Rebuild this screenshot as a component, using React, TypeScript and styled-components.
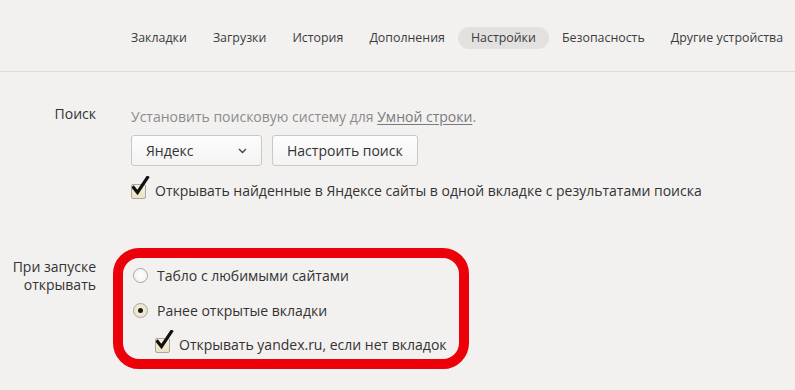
import React from 'react';
import styled, { createGlobalStyle } from 'styled-components';

const GlobalStyle = createGlobalStyle`
  html, body {
    margin: 0;
    padding: 0;
    background: #f2f1f0;
  }
  body {
    font-family: "Open Sans", "Noto Sans", sans-serif;
    color: #333;
    width: 795px;
    height: 390px;
    overflow: hidden;
  }
`;

const Page = styled.div`
  width: 795px;
  height: 390px;
  background: #f2f1f0;
`;

const Nav = styled.nav`
  display: flex;
  align-items: center;
  height: 72px;
  padding-left: 118px;
  border-bottom: 1px solid #dcdbda;
  box-sizing: border-box;
  padding-top: 5px;
`;

const NavItem = styled.div<{ active?: boolean }>`
  height: 22px;
  line-height: 22px;
  padding: 0 13px;
  border-radius: 11px;
  font-size: 12.4px;
  color: #3c3c3c;
  white-space: nowrap;
  background: ${(p) => (p.active ? '#e2e1e0' : 'transparent')};
`;

const Section = styled.section<{ top: number }>`
  display: grid;
  grid-template-columns: 96px 1fr;
  column-gap: 35px;
  margin-top: ${(p) => p.top}px;
`;

const Label = styled.div`
  text-align: right;
  font-size: 14px;
  line-height: 18px;
  color: #333;
`;

const Content = styled.div`
  display: flex;
  flex-direction: column;
  align-items: flex-start;
`;

const Hint = styled.div`
  font-size: 14px;
  line-height: 17px;
  color: #8c8c8c;
  margin-top: 3px;
`;

const HintLink = styled.span`
  color: #7a7a7a;
  text-decoration: underline;
  text-underline-offset: 2px;
`;

const Controls = styled.div`
  display: flex;
  gap: 10px;
  margin-top: 10px;
`;

const Button = styled.div<{ width: number }>`
  display: flex;
  align-items: center;
  justify-content: space-between;
  box-sizing: border-box;
  width: ${(p) => p.width}px;
  height: 31px;
  padding: 0 14px;
  border: 1px solid #c9c8c7;
  border-radius: 3px;
  background: linear-gradient(#fdfdfd, #f3f3f3);
  font-size: 14px;
  color: #333;
`;

const CheckRow = styled.div<{ top: number; indent?: number }>`
  display: flex;
  align-items: center;
  gap: 9px;
  margin-top: ${(p) => p.top}px;
  margin-left: ${(p) => p.indent ?? 0}px;
  font-size: 14px;
  color: #333;
  white-space: nowrap;
`;

const BoxWrap = styled.div`
  position: relative;
  width: 15px;
  height: 16px;
  flex: none;
`;

const Box = styled.div`
  position: absolute;
  left: 0;
  bottom: 0;
  width: 15px;
  height: 15px;
  box-sizing: border-box;
  border: 1px solid #a9a6a0;
  border-radius: 2px;
  background: linear-gradient(#f7f1dc, #ece3c4);
`;

const Tick = styled.svg`
  position: absolute;
  left: 1px;
  bottom: 2px;
`;

const Radio = styled.div<{ checked?: boolean }>`
  position: relative;
  width: 15px;
  height: 15px;
  box-sizing: border-box;
  border-radius: 50%;
  border: 1px solid #a8a6a3;
  background: ${(p) =>
    p.checked ? 'radial-gradient(#f7f1dc, #e9dfbf)' : 'radial-gradient(#ffffff, #f0efee)'};
  flex: none;
  margin-left: 2px;
  &::after {
    content: '';
    display: ${(p) => (p.checked ? 'block' : 'none')};
    position: absolute;
    left: 50%;
    top: 50%;
    width: 5px;
    height: 5px;
    margin: -2.5px 0 0 -2.5px;
    border-radius: 50%;
    background: #1a1a1a;
  }
`;

const OptionGroup = styled.div`
  position: relative;
  display: flex;
  flex-direction: column;
  align-items: flex-start;
  padding-top: 8px;
`;

// red annotation frame drawn over the startup options
const Highlight = styled.div`
  position: absolute;
  left: -18px;
  top: -10px;
  width: 356px;
  height: 121px;
  box-sizing: border-box;
  border: 10px solid #ec0009;
  border-radius: 26px;
  pointer-events: none;
`;

const Checkbox: React.FC = () => (
  <BoxWrap>
    <Box />
    <Tick width="18" height="21" viewBox="0 0 18 21">
      <path d="M1.5 11.5 L5.5 16.5 L15.5 1.5" fill="none" stroke="#111" strokeWidth="3.2" strokeLinecap="square" />
    </Tick>
  </BoxWrap>
);

const Chevron: React.FC = () => (
  <svg width="9" height="6" viewBox="0 0 9 6">
    <path d="M1 1 L4.5 4.5 L8 1" fill="none" stroke="#444" strokeWidth="1.4" />
  </svg>
);

const tabs = ['Закладки', 'Загрузки', 'История', 'Дополнения', 'Настройки', 'Безопасность', 'Другие устройства'];

const App: React.FC = () => {
  return (
    <Page>
      <GlobalStyle />
      <Nav>
        {tabs.map((t) => (
          <NavItem key={t} active={t === 'Настройки'}>
            {t}
          </NavItem>
        ))}
      </Nav>

      <Section top={33}>
        <Label>Поиск</Label>
        <Content>
          <Hint>
            Установить поисковую систему для <HintLink>Умной строки</HintLink>.
          </Hint>
          <Controls>
            <Button width={131}>
              Яндекс
              <Chevron />
            </Button>
            <Button width={146}>Настроить поиск</Button>
          </Controls>
          <CheckRow top={15}>
            <Checkbox />
            Открывать найденные в Яндексе сайты в одной вкладке с результатами поиска
          </CheckRow>
        </Content>
      </Section>

      <Section top={58}>
        <Label>
          При запуске
          <br />
          открывать
        </Label>
        <Content>
          <OptionGroup>
            <Highlight />
            <CheckRow top={0}>
              <Radio />
              Табло с любимыми сайтами
            </CheckRow>
            <CheckRow top={16}>
              <Radio checked />
              Ранее открытые вкладки
            </CheckRow>
            <CheckRow top={15} indent={24}>
              <Checkbox />
              Открывать yandex.ru, если нет вкладок
            </CheckRow>
          </OptionGroup>
        </Content>
      </Section>
    </Page>
  );
};

export default App;
